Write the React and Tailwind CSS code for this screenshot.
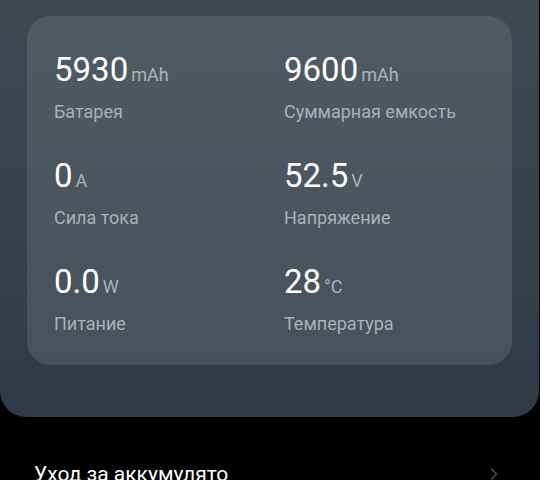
import { ChevronRight } from "lucide-react";

const stats = [
  { value: "5930", unit: "mAh", label: "Батарея" },
  { value: "9600", unit: "mAh", label: "Суммарная емкость" },
  { value: "0", unit: "A", label: "Сила тока" },
  { value: "52.5", unit: "V", label: "Напряжение" },
  { value: "0.0", unit: "W", label: "Питание" },
  { value: "28", unit: "°C", label: "Температура" },
];

const Stat = ({ value, unit, label }) => (
  <div className="flex flex-col">
    <div className="flex items-baseline h-[38px] leading-[38px]">
      <span className="text-[33px] text-white">{value}</span>
      <span className="ml-[3px] text-[18px] text-[#aab3b9]">{unit}</span>
    </div>
    <div className="mt-[11px] h-[24px] leading-[24px] text-[18px] text-[#a9b1b7]">{label}</div>
  </div>
);

export default function App() {
  return (
    <div className="min-h-[480px] w-[540px] bg-black overflow-hidden font-['Roboto',sans-serif]">
      {/* battery card */}
      <div className="w-[539px] rounded-b-[26px] bg-gradient-to-b from-[#3d4a52] to-[#2f3a46] px-[27px] pt-4 pb-[52px]">
        <div className="rounded-[24px] bg-gradient-to-b from-[#4f5b63] to-[#46525b] pl-[27px] pt-[35px] pb-[29px]">
          <div className="grid grid-cols-[230px_1fr] gap-y-[33px]">
            {stats.map((s) => (
              <Stat key={s.label} {...s} />
            ))}
          </div>
        </div>
      </div>

      <div className="mt-[43px] flex items-center justify-between pl-[34px] pr-[36px] h-[28px]">
        <span className="text-[21px] leading-[28px] text-white whitespace-nowrap">Уход за аккумулято</span>
        <ChevronRight className="w-5 h-5 text-[#4d4d4d]" strokeWidth={2} />
      </div>
    </div>
  );
}
